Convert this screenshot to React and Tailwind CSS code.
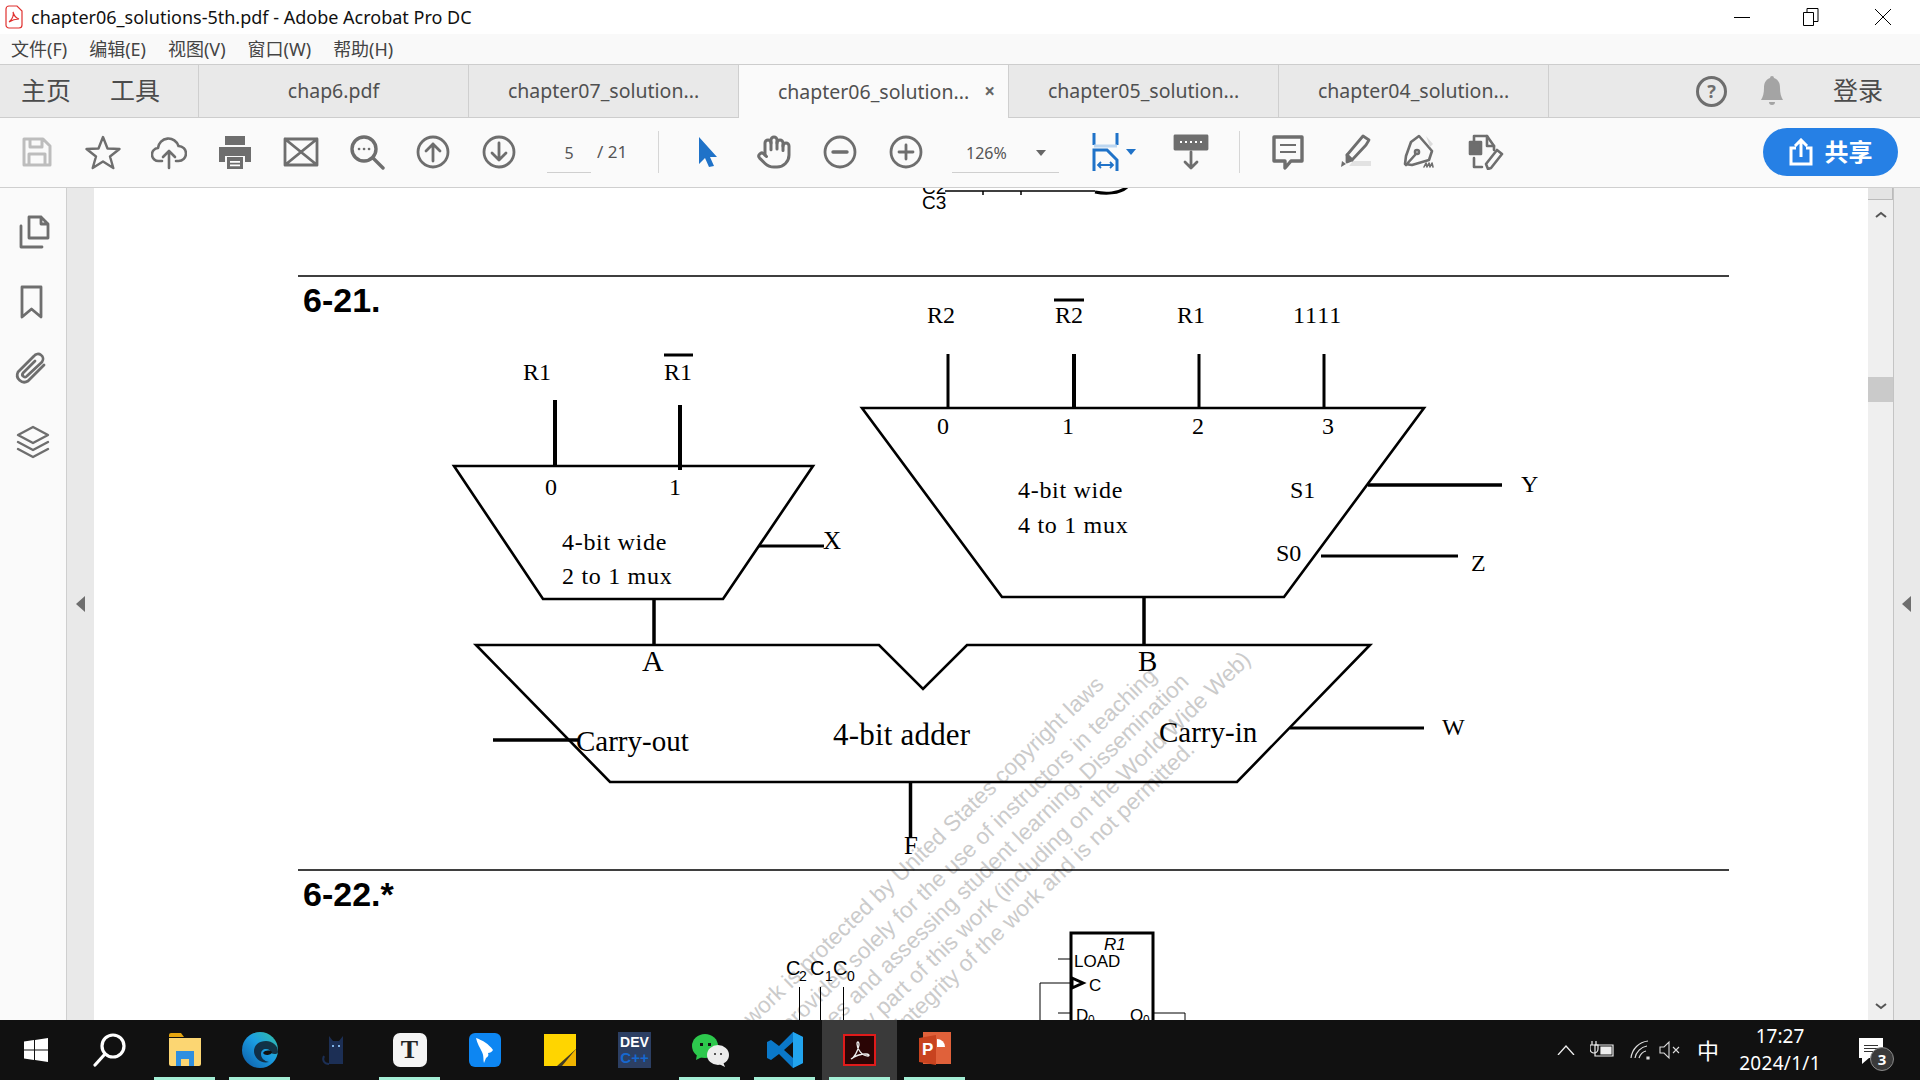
import React from 'react';
import { Hand } from 'lucide-react';

const SANS = "font-['Noto_Sans','Noto_Sans_CJK_SC',sans-serif]";

const TABS = [
  { label: 'chap6.pdf' },
  { label: 'chapter07_solution...' },
  { label: 'chapter06_solution...', active: true },
  { label: 'chapter05_solution...' },
  { label: 'chapter04_solution...' },
];

const MENU = ['文件(F)', '编辑(E)', '视图(V)', '窗口(W)', '帮助(H)'];

// labels of the schematic, page coordinates
const SERIF_LABELS = [
  { x: 523, y: 380, s: 24, t: 'R1' },
  { x: 664, y: 380, s: 24, t: 'R1' },
  { x: 545, y: 495, s: 24, t: '0' },
  { x: 669, y: 495, s: 24, t: '1' },
  { x: 562, y: 550, s: 24, t: '4-bit wide', ls: 0.7 },
  { x: 562, y: 584, s: 24, t: '2 to 1 mux', ls: 0.7 },
  { x: 823, y: 549, s: 25, t: 'X' },
  { x: 927, y: 323, s: 24, t: 'R2' },
  { x: 1055, y: 323, s: 24, t: 'R2' },
  { x: 1177, y: 323, s: 24, t: 'R1' },
  { x: 1293, y: 323, s: 24, t: '1111', ls: 1 },
  { x: 937, y: 434, s: 24, t: '0' },
  { x: 1062, y: 434, s: 24, t: '1' },
  { x: 1192, y: 434, s: 24, t: '2' },
  { x: 1322, y: 434, s: 24, t: '3' },
  { x: 1018, y: 498, s: 24, t: '4-bit wide', ls: 0.7 },
  { x: 1018, y: 533, s: 24, t: '4 to 1 mux', ls: 0.7 },
  { x: 1290, y: 498, s: 24, t: 'S1' },
  { x: 1276, y: 561, s: 24, t: 'S0' },
  { x: 1521, y: 492, s: 24, t: 'Y' },
  { x: 1471, y: 571, s: 24, t: 'Z' },
  { x: 642, y: 671, s: 30, t: 'A' },
  { x: 1138, y: 671, s: 29, t: 'B' },
  { x: 576, y: 751, s: 29, t: 'Carry-out' },
  { x: 833, y: 745, s: 31, t: '4-bit adder', ls: 0.2 },
  { x: 1159, y: 742, s: 29, t: 'Carry-in' },
  { x: 1442, y: 735, s: 24, t: 'W' },
  { x: 904, y: 854, s: 25, t: 'F' },
];

const WATERMARK = [
  { x: 1105, y: 686, t: 'This work is protected by United States copyright laws' },
  { x: 1158, y: 677, t: 'and is provided solely for the use of instructors in teaching' },
  { x: 1190, y: 683, t: 'their courses and assessing student learning. Dissemination' },
  { x: 1252, y: 661, t: 'or sale of any part of this work (including on the World Wide Web)' },
  { x: 1196, y: 751, t: 'will destroy the integrity of the work and is not permitted.' },
];

const Icon = ({ children, className = '' }) => (
  <svg viewBox="0 0 36 36" fill="none" stroke="#6e6e6e" strokeWidth="2.8" strokeLinejoin="round" strokeLinecap="round" className={`w-9 h-9 ${className}`}>
    {children}
  </svg>
);

const Slot = ({ children }) => (
  <div className="w-[66px] h-full flex items-center justify-center shrink-0">{children}</div>
);

const Page = () => (
  <svg viewBox="94 188 1774 832" className="w-full h-full bg-white">
    <g className="font-['Liberation_Sans',sans-serif]" fontSize="22.5" fill="#cbcbcb" textAnchor="end">
      {WATERMARK.map((w) => (
        <text key={w.x} x={w.x} y={w.y} transform={`rotate(-44 ${w.x} ${w.y})`}>{w.t}</text>
      ))}
    </g>

    <g stroke="#000" fill="none" strokeWidth="3">
      {/* rest of the previous problem */}
      <path d="M945 191h150M983 191v4M1021 191v4" strokeWidth="1.5" />
      <path d="M1095 192c10 2 24 2 32-5" strokeWidth="3" />
      <path d="M298 276h1431M298 870h1431" strokeWidth="1.5" />

      {/* 2 to 1 mux */}
      <path d="M555 400v66M680 405v65" strokeWidth="4" />
      <path d="M454 466h359l-90 133H543z" strokeWidth="2.6" />
      <path d="M759 546h65" strokeWidth="3" />
      <path d="M664 355h29" strokeWidth="3" />
      <path d="M654 599v46" strokeWidth="3.5" />

      {/* 4 to 1 mux */}
      <path d="M948 354v54M1199 354v54M1324 354v54" strokeWidth="3" />
      <path d="M1074 354v54" strokeWidth="4" />
      <path d="M862 408h562l-140 189H1002z" strokeWidth="2.6" />
      <path d="M1368 485h134" strokeWidth="3.5" />
      <path d="M1321 556h137" strokeWidth="3" />
      <path d="M1054 300h30" strokeWidth="3" />
      <path d="M1144 597v48" strokeWidth="3.5" />

      {/* adder */}
      <path d="M476 645h403l44 44 44-44h403l-133 137H610z" strokeWidth="2.6" />
      <path d="M493 740h85" strokeWidth="3.5" />
      <path d="M1290 728h134" strokeWidth="3" />
      <path d="M910.500 782v55" strokeWidth="3.5" />

      {/* next problem */}
      <path d="M799.500 987v33M820.500 987v33M843.500 987v33" strokeWidth="1" />
      <path d="M1071 1020v-87h82v87" strokeWidth="3" />
      <path d="M1058 959h12M1058 1013h12M1154 1013h31v7M1040 1020v-37h30" strokeWidth="1" />
      <path d="M1072 978l11 5-11 5z" strokeWidth="3" />
    </g>

    <g className="font-['Liberation_Serif',serif]" fill="#000">
      {SERIF_LABELS.map((l) => (
        <text key={`${l.x}-${l.y}`} x={l.x} y={l.y} fontSize={l.s} letterSpacing={l.ls}>{l.t}</text>
      ))}
    </g>

    <g className="font-['Liberation_Sans',sans-serif]" fill="#000">
      <text x="303" y="312" fontSize="34" fontWeight="700">6-21.</text>
      <text x="303" y="906" fontSize="34" fontWeight="700">6-22.*</text>
      <text x="922" y="194" fontSize="19">C2</text>
      <text x="922" y="209" fontSize="19">C3</text>
      <text x="786" y="975" fontSize="20">C</text>
      <text x="799" y="981" fontSize="14">2</text>
      <text x="810" y="975" fontSize="20">C</text>
      <text x="825" y="981" fontSize="14">1</text>
      <text x="833" y="975" fontSize="20">C</text>
      <text x="847" y="981" fontSize="14">0</text>
      <text x="1104" y="950" fontSize="17" fontStyle="italic">R1</text>
      <text x="1074" y="967" fontSize="17">LOAD</text>
      <text x="1089" y="991" fontSize="17">C</text>
      <text x="1076" y="1021" fontSize="17">D</text>
      <text x="1088" y="1024" fontSize="12">0</text>
      <text x="1130" y="1021" fontSize="17">Q</text>
      <text x="1143" y="1024" fontSize="12">0</text>
    </g>
  </svg>
);

const Toolbar = () => (
  <div className="h-[70px] pb-[2px] bg-[#fafafa] border-b border-[#cfcfcf] flex items-center text-[16px] text-[#555]">
    <div className="w-[4px] shrink-0" />
    <Slot>
      <svg viewBox="0 0 30 30" className="w-[30px] h-[30px]" fill="none" stroke="#bdbdbd" strokeWidth="3" strokeLinejoin="round">
        <path d="M2 2h19l7 7v19H2zM8 2v8h12V2M7 28V17h16v11" />
      </svg>
    </Slot>
    <Slot><Icon><path d="M18 3l4.500 11.500 12 .5-9.500 7.500 3.300 11.500L18 27.500 7.700 34 11 22.500 1.500 15l12-.5z" strokeWidth="2.400" /></Icon></Slot>
    <Slot>
      <Icon>
        <path d="M11 27H8a6.500 6.500 0 0 1-1-13A10.500 10.500 0 0 1 27.500 12a7.500 7.500 0 0 1 0 15H25" strokeWidth="2.600" />
        <path d="M18 34V17m-6 6l6-6 6 6" strokeWidth="2.600" />
      </Icon>
    </Slot>
    <Slot>
      <svg viewBox="0 0 36 36" className="w-9 h-9" fill="#6e6e6e">
        <path d="M8 2h20v9H8zM2 13h32v15h-6v-6H8v6H2z" />
        <path d="M10 23h16v12H10z" />
        <path d="M13 27h10v1.800H13zM13 30.500h10v1.800H13z" fill="#fff" />
      </svg>
    </Slot>
    <Slot><Icon><path d="M2 5h32v26H2zM2 5l32 26M34 5L2 31" /></Icon></Slot>
    <Slot>
      <Icon>
        <circle cx="15" cy="15" r="12" strokeWidth="3.400" />
        <path d="M24 24l10 10" strokeWidth="3.400" />
        <path d="M10 15h.1M15 15h.1M20 15h.1" strokeWidth="2.600" />
      </Icon>
    </Slot>
    <Slot><Icon><circle cx="18" cy="18" r="15" /><path d="M18 27V10m-7 7l7-7 7 7" /></Icon></Slot>
    <Slot><Icon><circle cx="18" cy="18" r="15" /><path d="M18 9v17m-7-7l7 7 7-7" /></Icon></Slot>
    <div className="ml-[15px] w-[44px] h-[39px] mt-[4px] border-b border-[#cfcfcf] flex items-center justify-center">5</div>
    <span className="ml-[6px] w-[61px] text-[17px]">/ 21</span>
    <div className="w-px h-[42px] bg-[#d6d6d6]" />
    <div className="w-[16px] shrink-0" />
    <Slot>
      <svg viewBox="0 0 20 30" className="w-[20px] h-[30px]" fill="#1f72c8">
        <path d="M1 0l18 20h-7l4 9-5 1-4-9-6 6z" />
      </svg>
    </Slot>
    <Slot><Hand className="w-9 h-9" stroke="#6e6e6e" strokeWidth="2" /></Slot>
    <Slot><Icon><circle cx="18" cy="18" r="15" /><path d="M11 18h14" strokeWidth="3.400" /></Icon></Slot>
    <Slot><Icon><circle cx="18" cy="18" r="15" /><path d="M11 18h14M18 11v14" /></Icon></Slot>
    <div className="ml-[13px] w-[107px] h-[39px] mt-[4px] border-b border-[#cfcfcf] flex items-center pl-[14px]">
      126%
      <span className="ml-[29px] w-0 h-0 border-x-[5px] border-x-transparent border-t-[6px] border-t-[#666]" />
    </div>
    <svg viewBox="0 0 28 38" className="w-[28px] h-[38px] ml-[33px]" fill="none" stroke="#1f72c8" strokeWidth="3">
      <path d="M2 0v12M25 0v12" />
      <path d="M2 13h23" stroke="#bcd6f0" strokeWidth="3" />
      <path d="M2 38V17h13l10 10v11" />
      <path d="M6 32h15M9 29l-3 3 3 3M18 29l3 3-3 3" strokeWidth="1.800" />
    </svg>
    <span className="ml-[6px] w-0 h-0 border-x-[5px] border-x-transparent border-t-[6px] border-t-[#1f72c8]" />
    <svg viewBox="0 0 36 36" className="w-9 h-9 ml-[37px]" fill="none" stroke="#6e6e6e" strokeWidth="2.800" strokeLinecap="round" strokeLinejoin="round">
      <path d="M2 2h32v13H2z" fill="#6e6e6e" />
      <path d="M7 8h22" stroke="#fff" strokeWidth="2" strokeDasharray="2 3" strokeLinecap="butt" />
      <path d="M18 18v16m-6-6l6 6 6-6" />
    </svg>
    <div className="ml-[30px] w-px h-[42px] bg-[#d6d6d6]" />
    <div className="w-[15px] shrink-0" />
    <Slot>
      <svg viewBox="0 0 36 36" className="w-9 h-9" fill="none" stroke="#6e6e6e" strokeWidth="3.400" strokeLinejoin="round">
        <path d="M4 3h28v24H21l-6 7v-7H4z" />
        <path d="M10 11h16M10 18h16" strokeWidth="2.200" />
      </svg>
    </Slot>
    <Slot>
      <svg viewBox="0 0 36 36" className="w-9 h-9" fill="none" stroke="#6e6e6e" strokeWidth="2.800" strokeLinejoin="round">
        <path d="M13 32h22v-5H17z" fill="#e2e2e2" stroke="none" />
        <path d="M11 21L27 2l6 4-3 5-14 15z" />
        <path d="M11 21l5 5-5 2z" fill="#6e6e6e" />
        <path d="M6 27l4 3-5 3z" fill="#6e6e6e" stroke="none" />
      </svg>
    </Slot>
    <Slot>
      <svg viewBox="0 0 36 36" className="w-9 h-9" fill="none" stroke="#6e6e6e" strokeWidth="2.600" strokeLinejoin="round" strokeLinecap="round">
        <path d="M17 2l13 15-3 9-17 5-7-1 1-8 5-14z" />
        <path d="M4 31l9-10" />
        <circle cx="15" cy="18" r="2" />
        <path d="M24 2l7 8-3 3z" fill="#dcdcdc" stroke="none" />
        <path d="M22 33l2-4 1 4 2-4 1 4 2-4 1 4" strokeWidth="1.600" />
      </svg>
    </Slot>
    <Slot>
      <svg viewBox="0 0 36 36" className="w-9 h-9" fill="none" stroke="#6e6e6e" strokeWidth="2.600" strokeLinejoin="round" strokeLinecap="round">
        <path d="M6 9V2h13l7 10v4" />
        <path d="M19 2v10h7" />
        <path d="M2 8h11v12H2z" fill="#6e6e6e" />
        <path d="M6 24v9h8" />
        <path d="M20 35l-2-5 11-14 5 4-11 14z" />
      </svg>
    </Slot>
    <button className="ml-auto mr-[22px] w-[135px] h-[48px] rounded-full bg-[#2680e5] text-white flex items-center justify-center gap-[12px] text-[24px] font-bold leading-none">
      <svg viewBox="0 0 24 28" className="w-[24px] h-[28px]" fill="none" stroke="#fff" strokeWidth="3">
        <path d="M7 10H2v16h20V10h-5M12 19V3M6 8l6-6 6 6" />
      </svg>
      共享
    </button>
  </div>
);

const TASK_APPS = [
  {
    id: 'win',
    w: 72,
    icon: (
      <svg viewBox="0 0 24 24" className="w-6 h-6" fill="#fff">
        <path d="M0 3.400l10-1.400v9.500H0zM11 1.900L24 0v11.500H11zM0 12.500h10V22L0 20.600zM11 12.500h13V24l-13-1.900z" />
      </svg>
    ),
  },
  {
    id: 'search',
    icon: (
      <svg viewBox="0 0 34 34" className="w-[34px] h-[34px]" fill="none" stroke="#fff" strokeWidth="3.200" strokeLinecap="round">
        <circle cx="20" cy="13" r="11" />
        <path d="M12 21L2 32" />
      </svg>
    ),
  },
  {
    id: 'folder',
    active: true,
    icon: (
      <svg viewBox="0 0 32 36" className="w-8 h-9">
        <path d="M0 3a2 2 0 0 1 2-2h10l3 4H0z" fill="#e5a50f" />
        <path d="M0 6h32v26a2 2 0 0 1-2 2H2a2 2 0 0 1-2-2z" fill="#fcd672" />
        <path d="M7 19h18v15H7z" fill="#2f8fe0" />
        <path d="M12 27h8v7h-8z" fill="#fcd672" />
      </svg>
    ),
  },
  {
    id: 'edge',
    active: true,
    icon: (
      <svg viewBox="0 0 38 38" className="w-[38px] h-[38px]">
        <defs>
          <linearGradient id="edgeG" x1="0" y1="1" x2="1" y2="0">
            <stop offset="0" stopColor="#0c59a4" />
            <stop offset="0.55" stopColor="#1b9de2" />
            <stop offset="1" stopColor="#35c1a0" />
          </linearGradient>
        </defs>
        <circle cx="19" cy="19" r="18" fill="url(#edgeG)" />
        <path d="M37 21c0-7-6-11-12-11-7 0-12 4-12 10 0 7 7 13 15 11-5-1-8-4-8-8 0-3 2-5 5-5 3 0 5 2 5 4 3 2 7 1 7-1z" fill="#0f1f2e" opacity="0.85" />
        <path d="M22 22c2-3 7-3 9-1 0 2-3 3-5 3-2 0-3-1-4-2z" fill="#111" />
      </svg>
    ),
  },
  {
    id: 'cat',
    icon: (
      <svg viewBox="0 0 28 32" className="w-[28px] h-8">
        <path d="M8 2l4 5h6l4-5v28H8z" fill="#1c2f55" />
        <path d="M8 30c-5 0-7-4-5-8" fill="none" stroke="#1c2f55" strokeWidth="2" />
        <path d="M11 11h2v2h-2zM17 11h2v2h-2z" fill="#7fb2e6" />
      </svg>
    ),
  },
  {
    id: 'typora',
    active: true,
    icon: (
      <div className="w-[34px] h-[34px] rounded-[7px] bg-[#f4f4f4] flex items-center justify-center text-[26px] font-bold text-[#222] font-['Liberation_Serif',serif] leading-none">T</div>
    ),
  },
  {
    id: 'feather',
    icon: (
      <svg viewBox="0 0 32 34" className="w-8 h-[34px]">
        <rect width="32" height="34" rx="6" fill="#0d86f2" />
        <path d="M7 5c6 2 13 6 17 12-1 2-3 3-5 3 1 2 0 4-2 5l-2 5c-1-4 0-7-2-11C11 15 8 10 7 5z" fill="#fff" />
      </svg>
    ),
  },
  {
    id: 'sticky',
    icon: (
      <svg viewBox="0 0 32 32" className="w-8 h-8">
        <path d="M0 0h32v32H0z" fill="#ffd500" />
        <path d="M32 15v17H13z" fill="#3f3a25" />
        <path d="M32 15v17H18z" fill="#f0b400" />
      </svg>
    ),
  },
  {
    id: 'dev',
    icon: (
      <div className="w-[33px] h-[36px] bg-[#2c3f63] flex flex-col items-center justify-center font-['Liberation_Sans',sans-serif] font-bold leading-[15px]">
        <span className="text-[14px] text-white">DEV</span>
        <span className="text-[15px] text-[#1668d0]">C++</span>
      </div>
    ),
  },
  {
    id: 'wechat',
    active: true,
    icon: (
      <svg viewBox="0 0 38 36" className="w-[38px] h-9">
        <ellipse cx="14" cy="14" rx="13" ry="12" fill="#2dc84d" />
        <path d="M6 22l-1 6 6-3z" fill="#2dc84d" />
        <path d="M9 11h3v3H9zM17 11h3v3h-3z" fill="#111" />
        <ellipse cx="27" cy="23" rx="11" ry="10" fill="#ececec" />
        <path d="M32 30l2 5-6-3z" fill="#ececec" />
        <path d="M23 21h2v2h-2zM29 21h2v2h-2z" fill="#555" />
      </svg>
    ),
  },
  {
    id: 'vscode',
    active: true,
    icon: (
      <svg viewBox="0 0 36 36" className="w-9 h-9">
        <path d="M26 0l10 5v26l-10 5-14-14-8 6-4-2V10l4-2 8 6zM26 10l-9 8 9 8z" fill="#0a78c9" />
        <path d="M26 0l10 5v26l-10 5z" fill="#22a4ee" />
      </svg>
    ),
  },
  {
    id: 'acrobat',
    active: true,
    wide: true,
    icon: (
      <div className="w-[33px] h-[32px] bg-[#2a0505] border-2 border-[#e01b1b] flex items-center justify-center">
        <svg viewBox="0 0 24 24" className="w-6 h-6" fill="none" stroke="#eee" strokeWidth="1.300">
          <path d="M3 21c3-1 7-8 8-14 0-4-2-4-2-1 0 5 5 12 11 12 2 0 1-2-2-2-5 0-11 2-15 5z" />
        </svg>
      </div>
    ),
  },
  {
    id: 'ppt',
    active: true,
    icon: (
      <svg viewBox="0 0 32 36" className="w-8 h-9">
        <path d="M4 0h28v32H4z" fill="#e0613a" />
        <path d="M18 7a8 8 0 0 1 8 8h-8z" fill="#fff" />
        <path d="M0 6l17-3v30L0 30z" fill="#c8431f" />
        <text x="3" y="23" fontSize="17" fontWeight="700" fill="#fff" className="font-['Liberation_Sans',sans-serif]">P</text>
      </svg>
    ),
  },
];

const Taskbar = () => (
  <footer className={`relative h-[60px] bg-[#111] flex items-center text-white ${SANS}`}>
    {TASK_APPS.map((app) => (
      <div key={app.id} className={`relative h-full flex items-center justify-center shrink-0 ${app.w === 72 ? 'w-[72px]' : 'w-[75px]'} ${app.wide ? 'bg-[#3a3a3a]' : ''}`}>
        {app.icon}
        {app.active && <span className="absolute bottom-0 left-[7px] w-[61px] h-[3px] bg-[#a3eed5]" />}
      </div>
    ))}
    <div className="ml-auto flex items-center h-full">
      <svg viewBox="0 0 18 10" className="w-[18px] h-[10px]" fill="none" stroke="#eee" strokeWidth="1.300"><path d="M1 10l8-9 8 9" /></svg>
      <svg viewBox="0 0 24 20" className="w-[24px] h-[20px] ml-[15px]" fill="none" stroke="#eee" strokeWidth="1.200">
        <path d="M5 5h18v11H5z" /><path d="M11 7h10v7H11z" fill="#eee" /><path d="M2 1v4M6 1v4M0 5h8v4a4 4 0 0 1-8 0z" />
      </svg>
      <svg viewBox="0 0 20 20" className="w-[20px] h-[20px] ml-[16px]" fill="none" stroke="#ddd" strokeWidth="1.200">
        <path d="M1 18C2 9 9 2 18 1M5 18c1-6 6-11 12-12M9 18c1-3 3-6 7-7" /><path d="M17 17h2v2h-2z" fill="#ddd" />
      </svg>
      <svg viewBox="0 0 22 20" className="w-[22px] h-[20px] ml-[9px]" fill="none" stroke="#ddd" strokeWidth="1.100">
        <path d="M1 7h4l5-5v16l-5-5H1zM14 7l6 6M20 7l-6 6" />
      </svg>
      <span className="ml-[15px] w-[24px] text-[22px] text-center">中</span>
      <div className="ml-[10px] w-[100px] flex flex-col items-center text-[19px] leading-[27px]">
        <span>17:27</span>
        <span className="tracking-[0.3px]">2024/1/1</span>
      </div>
      <div className="relative ml-[29px] mr-[37px] w-[24px] h-[20px] mb-[4px] bg-white flex flex-col justify-center gap-[2px] px-[5px]">
        <span className="h-px bg-[#333]" />
        <span className="h-px bg-[#333]" />
        <span className="h-px bg-[#333]" />
        <span className="absolute left-[3px] top-[20px] w-0 h-0 border-r-[7px] border-r-transparent border-t-[6px] border-t-white" />
        <span className="absolute left-[11px] top-[9px] w-[24px] h-[24px] rounded-full bg-[#3a3a3a] border border-[#8a8a8a] flex items-center justify-center text-[15px] font-bold text-white">3</span>
      </div>
    </div>
  </footer>
);

export default function App() {
  return (
    <div className={`w-[1920px] h-[1080px] overflow-hidden flex flex-col bg-white ${SANS}`}>
      <div className="h-[34px] flex items-center bg-white shrink-0">
        <svg viewBox="0 0 18 24" className="w-[18px] h-[24px] ml-[5px]" fill="none" stroke="#e0312f" strokeWidth="1.200">
          <path d="M1 4a3 3 0 0 1 3-3h8l5 5v14a3 3 0 0 1-3 3H4a3 3 0 0 1-3-3z" />
          <path d="M4 17c4-3 5-8 4-10 1 4 3 6 6 7-4 0-7 1-10 3z" />
        </svg>
        <span className="ml-[8px] text-[18px] text-[#111]">chapter06_solutions-5th.pdf - Adobe Acrobat Pro DC</span>
        <div className="ml-auto flex items-center">
          <span className="w-[16px] h-px bg-black mr-[53px]" />
          <svg viewBox="0 0 16 18" className="w-[16px] h-[18px] mr-[55px]" fill="none" stroke="#000"><path d="M.5 4.500h10v13H.5zM4 4.500v-4h11v13h-4.500" /></svg>
          <svg viewBox="0 0 18 18" className="w-[18px] h-[18px] mr-[28px]" stroke="#000"><path d="M1 1l16 16M17 1L1 17" /></svg>
        </div>
      </div>

      <div className="h-[30px] bg-[#f9f9f9] flex items-center pl-[11px] gap-[22px] text-[18px] text-[#444] shrink-0">
        {MENU.map((m) => <span key={m}>{m}</span>)}
      </div>

      <div className="h-[54px] bg-[#e9e9e9] border-y border-[#cdcdcd] flex items-stretch shrink-0">
        <div className="w-[199px] flex items-center pl-[21px] gap-[39px] text-[25px] text-[#4b4b4b] border-r border-[#cfcfcf]">
          <span>主页</span><span>工具</span>
        </div>
        {TABS.map((t) => (
          <div key={t.label} className={`relative w-[270px] flex items-center justify-center text-[19.5px] text-[#505050] border-r border-[#cfcfcf] ${t.active ? 'bg-[#fafafa] -mb-px' : ''}`}>
            {t.label}
            {t.active && <span className="absolute right-[13px] text-[19px] font-bold text-[#666]">×</span>}
          </div>
        ))}
        <div className="ml-auto flex items-center pr-[37px]">
          <div className="w-[31px] h-[31px] rounded-full border-[3px] border-[#6e6e6e] flex items-center justify-center text-[18px] font-bold text-[#6e6e6e] mr-[33px]">?</div>
          <svg viewBox="0 0 24 32" className="w-[24px] h-[32px] mr-[49px]" fill="#a4a4a4">
            <path d="M10 3a2 2 0 0 1 4 0c5 2 6 6 6 10 0 5 1 9 3 12H1c2-3 3-7 3-12 0-4 1-8 6-10zM9 27h6a3 3 0 0 1-6 0z" />
          </svg>
          <span className="text-[25px] text-[#4b4b4b]">登录</span>
        </div>
      </div>

      <Toolbar />

      <main className="h-[832px] flex shrink-0">
        <aside className="w-[67px] bg-[#fafafa] border-r border-[#cfcfcf] flex flex-col items-center pt-[26px] shrink-0">
          <Icon className="ml-[1px]"><path d="M13 3h12l7 7v14H13zM25 3v7h7M5 12v21h21" /></Icon>
          <Icon className="mt-[34px] -ml-[3px]"><path d="M8 3h19v30l-9.500-8L8 33z" /></Icon>
          <Icon className="mt-[31px] -ml-[4px]"><path d="M31 14L15 30a7 7 0 0 1-10-9L21 5a5 5 0 0 1 8 6L14 25a2 2 0 0 1-4-3l12-12" /></Icon>
          <Icon className="mt-[37px] -ml-[1px]"><path d="M18 3l15 8-15 8-15-8zM3 18l15 8 15-8M3 25l15 8 15-8" strokeWidth="2.400" /></Icon>
        </aside>
        <div className="w-[27px] bg-[#e9e9e9] shrink-0 flex items-center justify-center">
          <span className="w-0 h-0 border-y-[8px] border-y-transparent border-r-[9px] border-r-[#6e6e6e]" />
        </div>
        <div className="flex-1 min-w-0">
          <Page />
        </div>
        <div className="relative w-[26px] bg-[#efefef] shrink-0 border-r border-[#c4c4c4] flex flex-col items-center">
          <div className="w-full h-[12px] bg-[#e4e4e4] border-b border-r border-[#bbb]" />
          <svg viewBox="0 0 12 7" className="w-[12px] h-[7px] mt-[11px]" fill="none" stroke="#555" strokeWidth="2"><path d="M1 6l5-4 5 4" /></svg>
          <div className="w-full h-[25px] mt-[159px] bg-[#cacaca]" />
          <svg viewBox="0 0 12 7" className="w-[12px] h-[7px] mt-auto mb-[10px]" fill="none" stroke="#555" strokeWidth="2"><path d="M1 1l5 4 5-4" /></svg>
        </div>
        <div className="w-[26px] bg-[#e9e9e9] shrink-0 flex items-center justify-center pr-[2px]">
          <span className="w-0 h-0 border-y-[8px] border-y-transparent border-r-[9px] border-r-[#6e6e6e]" />
        </div>
      </main>

      <Taskbar />
    </div>
  );
}
